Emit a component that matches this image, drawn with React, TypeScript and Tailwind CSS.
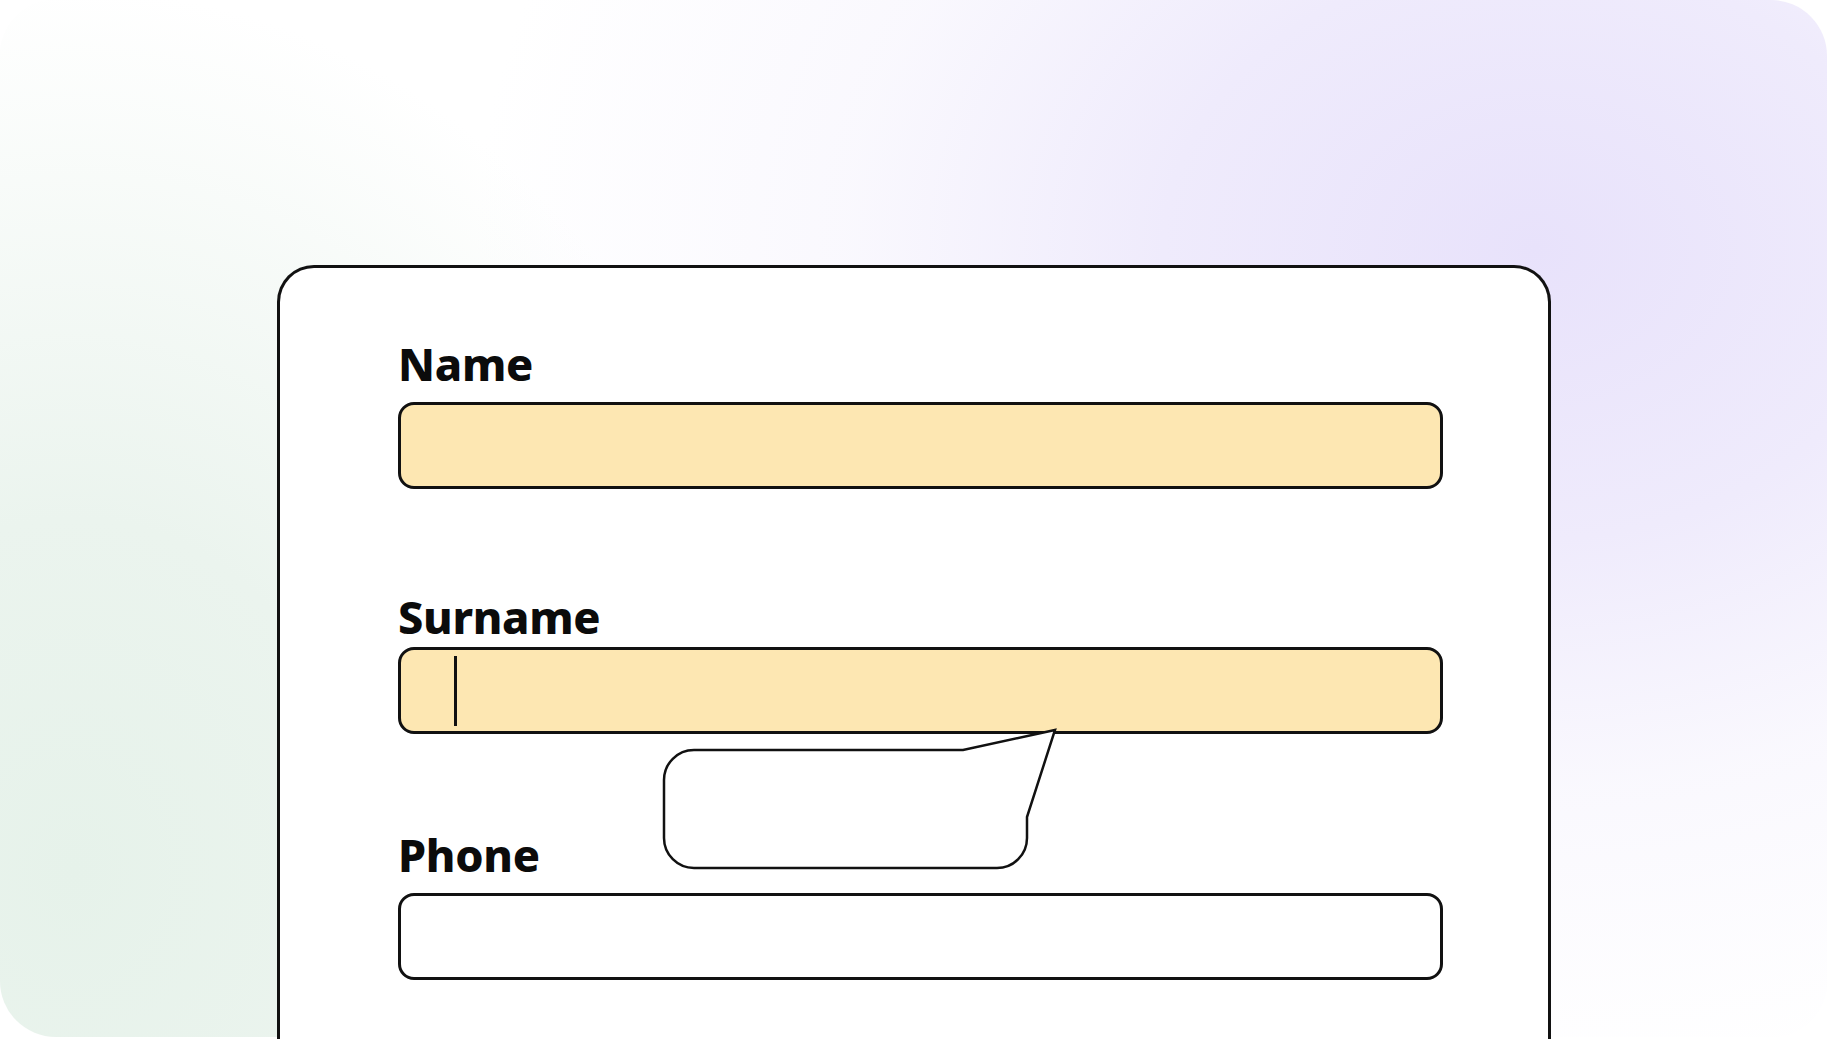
import React from 'react';

// Form fields shown in the card
const fields = [
  { label: 'Name', filled: true, cursor: false, labelGap: 'mt-[16px]', top: 'mt-0' },
  { label: 'Surname', filled: true, cursor: true, labelGap: 'mt-[8px]', top: 'mt-[106px]' },
  { label: 'Phone', filled: false, cursor: false, labelGap: 'mt-[16px]', top: 'mt-[99px]' },
];

const Field: React.FC<{ label: string; filled: boolean; cursor: boolean; labelGap: string; top: string }> = ({
  label,
  filled,
  cursor,
  labelGap,
  top,
}) => (
  <div className={top}>
    <div className="h-[44px] text-[45px] leading-[44px] font-extrabold text-[#0b0b0b] tracking-[-0.3px]">{label}</div>
    <div
      className={`${labelGap} flex h-[87px] w-[1045px] items-center rounded-[16px] border-[3px] border-[#111] pl-[53px] ${
        filled ? 'bg-[#fde7b2]' : 'bg-white'
      }`}
    >
      {cursor && <span className="block h-[70px] w-[2.5px] bg-[#111]" />}
    </div>
  </div>
);

// Empty speech bubble pointing at the surname field
const Bubble = () => (
  <svg
    className="absolute left-[380px] top-[457px]"
    width="400"
    height="150"
    viewBox="0 0 400 150"
    fill="none"
  >
    <path
      d="M34 25 L303 25 L395 5 L367 92 L367 113 A30 30 0 0 1 337 143 L34 143 A30 30 0 0 1 4 113 L4 55 A30 30 0 0 1 34 25 Z"
      fill="#fff"
      stroke="#111"
      strokeWidth="2.5"
      strokeLinejoin="miter"
    />
  </svg>
);

export default function App() {
  return (
    <div className="h-[1039px] w-[1827px] overflow-hidden bg-white" style={{ fontFamily: '"Noto Sans", "Open Sans", sans-serif' }}>
      <div className="relative h-[1037px] rounded-[56px] bg-white bg-[image:radial-gradient(ellipse_58%_80%_at_84%_24%,#e8e2fb_0%,#efebfc_35%,rgba(246,244,253,0.6)_65%,rgba(255,255,255,0)_100%),radial-gradient(ellipse_40%_85%_at_4%_84%,#e6f2ea_0%,#ebf4ee_40%,rgba(255,255,255,0)_100%)] pl-[277px] pt-[265px]">
        <div className="relative h-[774px] w-[1274px] rounded-t-[37px] border-[3px] border-b-0 border-[#111] bg-white pl-[118px] pt-[74px]">
          {fields.map((f) => (
            <Field key={f.label} {...f} />
          ))}
          <Bubble />
        </div>
      </div>
    </div>
  );
}
